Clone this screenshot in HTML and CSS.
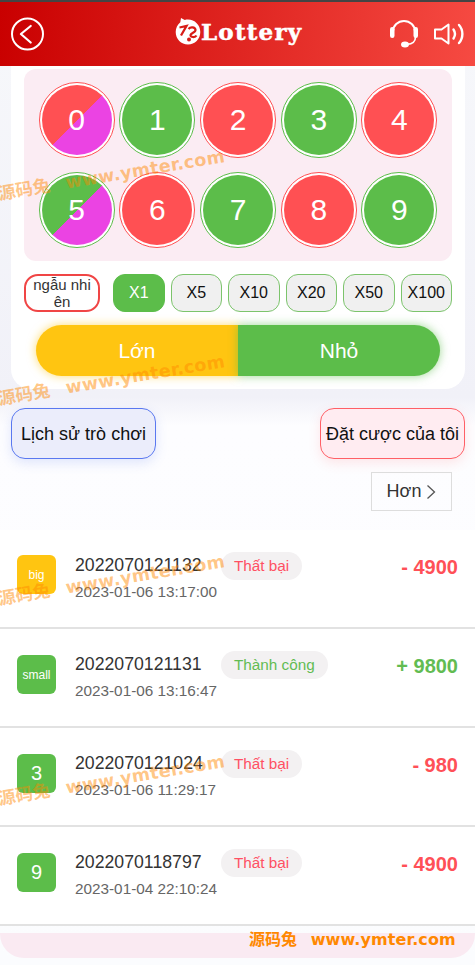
FILE: index.html
```html
<!DOCTYPE html>
<html lang="en">
<head>
    <meta charset="UTF-8">
    <meta name="viewport" content="width=device-width, initial-scale=1.0">
    <title>Lottery</title>
    <link rel="stylesheet" href="styles.css">
</head>
<body>
    <div class="page">
        <header class="top-bar">
            <svg class="back-icon" width="34" height="34" viewBox="0 0 34 34" fill="none" stroke="#fff" stroke-width="2">
                <circle cx="16.500" cy="17" r="15.500"/>
                <path d="M19.700 9 9.900 17l9.800 8.500" stroke-linecap="round" stroke-linejoin="round" stroke-width="2.200"/>
            </svg>
            <div class="logo">
                <svg width="26" height="28" viewBox="0 0 26 28">
                    <path fill="#fff" d="M13 2.500c6.800 0 12.300 5.500 12.300 12.500S19.800 27.500 13 27.500.7 22 .7 15c0-4 1.800-7.500 4.600-9.800L6 1l3.800 1.900C10.800 2.600 11.900 2.500 13 2.500z"/>
                    <path fill="none" stroke="#d81c17" stroke-width="2.300" d="M4.500 10.500l7-1.500-5.500 9.500"/>
                    <path fill="none" stroke="#d81c17" stroke-width="2.200" d="M13.500 12c2-2.500 6.500-2 7 .8.500 2.600-4.500 3-5 5.200-.4 2.200 4.500 3 6 .5"/>
                    <circle cx="14" cy="22.500" r="2" fill="#d81c17"/>
                </svg>
                <span class="logo-text">Lottery</span>
            </div>
            <div class="top-icons">
                <svg width="28" height="28" viewBox="0 0 28 28" fill="none" stroke="#fff" stroke-width="2">
                    <path d="M3 13.500v-2a11 10.500 0 0 1 22 0v2"/>
                    <rect x="0" y="7" width="4.500" height="11" rx="2.200" fill="#fff" stroke="none"/>
                    <rect x="23.500" y="7" width="4.500" height="11" rx="2.200" fill="#fff" stroke="none"/>
                    <path d="M25.500 17c0 4.500-3.500 7-8.500 7.400" stroke-width="1.600"/>
                    <ellipse cx="15" cy="24.500" rx="4" ry="3" fill="#fff" stroke="none"/>
                </svg>
                <svg width="30" height="22" viewBox="0 0 30 22" fill="none" stroke="#fff" stroke-width="2">
                    <path d="M1 6.500h6.500l7-5v19l-7-5H1z" stroke-linejoin="round"/>
                    <path d="M19.500 6.500c2 3 2 6 0 9M25 2c4.500 5 4.500 13 0 18" stroke-linecap="round" stroke-width="2.400"/>
                </svg>
            </div>
        </header>

        <section class="bet-card">
            <div class="ball-panel">
                <div class="ball ring-red"><span class="ball-fill fill-red-violet">0</span></div>
                <div class="ball ring-green"><span class="ball-fill fill-green">1</span></div>
                <div class="ball ring-red"><span class="ball-fill fill-red">2</span></div>
                <div class="ball ring-green"><span class="ball-fill fill-green">3</span></div>
                <div class="ball ring-red"><span class="ball-fill fill-red">4</span></div>
                <div class="ball ring-green"><span class="ball-fill fill-green-violet">5</span></div>
                <div class="ball ring-red"><span class="ball-fill fill-red">6</span></div>
                <div class="ball ring-green"><span class="ball-fill fill-green">7</span></div>
                <div class="ball ring-red"><span class="ball-fill fill-red">8</span></div>
                <div class="ball ring-green"><span class="ball-fill fill-green">9</span></div>
            </div>

            <div class="multi-row">
                <div class="random-btn">ngẫu nhi ên</div>
                <div class="multi-list">
                    <div class="multi-btn active">X1</div>
                    <div class="multi-btn">X5</div>
                    <div class="multi-btn">X10</div>
                    <div class="multi-btn">X20</div>
                    <div class="multi-btn">X50</div>
                    <div class="multi-btn">X100</div>
                </div>
            </div>

            <div class="size-row">
                <div class="size-btn size-big">Lớn</div>
                <div class="size-btn size-small">Nhỏ</div>
            </div>
        </section>

        <div class="tab-row">
            <div class="tab-btn tab-blue">Lịch sử trò chơi</div>
            <div class="tab-btn tab-red">Đặt cược của tôi</div>
        </div>

        <div class="more-row">
            <div class="more-btn">Hơn
                <svg width="10" height="16" viewBox="0 0 10 16" fill="none" stroke="#555" stroke-width="1.300"><path d="M1.500 1.500 8.500 8l-7 6.500"/></svg>
            </div>
        </div>

        <ul class="record-list">
            <li class="record">
                <div class="record-icon icon-yellow icon-word">big</div>
                <div class="record-info">
                    <div class="record-top">
                        <span class="record-id">2022070121132</span>
                        <span class="badge badge-lose">Thất bại</span>
                    </div>
                    <div class="record-date">2023-01-06 13:17:00</div>
                </div>
                <div class="record-amount lose">- 4900</div>
            </li>
            <li class="record">
                <div class="record-icon icon-green icon-word">small</div>
                <div class="record-info">
                    <div class="record-top">
                        <span class="record-id">2022070121131</span>
                        <span class="badge badge-win">Thành công</span>
                    </div>
                    <div class="record-date">2023-01-06 13:16:47</div>
                </div>
                <div class="record-amount win">+ 9800</div>
            </li>
            <li class="record">
                <div class="record-icon icon-green">3</div>
                <div class="record-info">
                    <div class="record-top">
                        <span class="record-id">2022070121024</span>
                        <span class="badge badge-lose">Thất bại</span>
                    </div>
                    <div class="record-date">2023-01-06 11:29:17</div>
                </div>
                <div class="record-amount lose">- 980</div>
            </li>
            <li class="record">
                <div class="record-icon icon-green">9</div>
                <div class="record-info">
                    <div class="record-top">
                        <span class="record-id">2022070118797</span>
                        <span class="badge badge-lose">Thất bại</span>
                    </div>
                    <div class="record-date">2023-01-04 22:10:24</div>
                </div>
                <div class="record-amount lose">- 4900</div>
            </li>
        </ul>

        <div class="bottom-strip"></div>

        <!-- site watermark sits over everything -->
        <div class="watermark wm-1">源码兔 <span>www.ymter.com</span></div>
        <div class="watermark wm-2">源码兔 <span>www.ymter.com</span></div>
        <div class="watermark wm-3">源码兔 <span>www.ymter.com</span></div>
        <div class="watermark wm-4">源码兔 <span>www.ymter.com</span></div>
        <div class="watermark-flat">源码兔 <span>www.ymter.com</span></div>
    </div>
</body>
</html>
```
FILE: styles.css
```css
* {
    margin: 0;
    padding: 0;
    box-sizing: border-box;
}

html, body {
    height: 100%;
}

body {
    font-family: 'Liberation Sans', Arial, sans-serif;
    background: #fff;
    overflow: hidden;
}

.page {
    position: relative;
    height: 965px;
    overflow: hidden;
    background: linear-gradient(180deg, #f7f8fb 0%, #f1f1f8 41%, #fdfdff 44%, #fbfcfe 100%);
    border-top: 2px solid #444;
}

.top-bar {
    height: 64px;
    padding: 0 11px;
    display: flex;
    align-items: center;
    justify-content: space-between;
    background: linear-gradient(95deg, #c90000 0%, #f64a42 100%);
    position: relative;
}

.logo {
    display: flex;
    align-items: center;
    position: absolute;
    left: 175px;
    top: 15px;
}

.logo-text {
    font-family: 'DejaVu Serif', serif;
    font-weight: 700;
    font-size: 23px;
    letter-spacing: 1.200px;
    color: #fff;
    -webkit-text-stroke: 0.5px #fff;
}

.top-icons {
    display: flex;
    align-items: center;
    gap: 16px;
}

.bet-card {
    margin: 0 10px 0 11px;
    padding: 3px 13px 13px;
    background: #fff;
    border-radius: 0 0 20px 20px;
}

.ball-panel {
    height: 192px;
    padding: 13px 14px 13px 14.700px;
    display: grid;
    grid-template-columns: repeat(5, 76px);
    grid-auto-rows: 76px;
    column-gap: 4.700px;
    row-gap: 14px;
    background: #fbecf3;
    border-radius: 12px;
}

.ball {
    width: 76px;
    height: 76px;
    border-radius: 50%;
    padding: 2px;
    background: #fff;
    border: 1px solid #ff5053;
}

.ring-red {
    border-color: #ff5053;
}

.ring-green {
    border-color: #5cbd4a;
}

.ball-fill {
    width: 100%;
    height: 100%;
    border-radius: 50%;
    display: flex;
    align-items: center;
    justify-content: center;
    color: #fff;
    font-size: 30px;
}

.fill-red {
    background: #ff5053;
}

.fill-green {
    background: #5cbd4a;
}

.fill-red-violet {
    background: linear-gradient(135deg, #ff5053 50%, #eb43e3 50%);
}

.fill-green-violet {
    background: linear-gradient(135deg, #5cbd4a 50%, #eb43e3 50%);
}

.multi-row {
    display: flex;
    justify-content: space-between;
    align-items: center;
    margin-top: 13px;
}

.random-btn {
    width: 76px;
    height: 38px;
    border: 2px solid #f04545;
    border-radius: 14px;
    font-size: 15px;
    line-height: 17px;
    text-align: center;
    color: #333;
    background: #fff;
}

.multi-list {
    display: flex;
    gap: 6px;
}

.multi-btn {
    width: 51.500px;
    height: 38px;
    display: flex;
    align-items: center;
    justify-content: center;
    border: 1px solid #7cc46c;
    border-radius: 12px;
    background: #f0f0f0;
    color: #111;
    font-size: 16px;
}

.multi-btn.active {
    background: #5cbd4a;
    border-color: #5cbd4a;
    color: #fff;
}

.size-row {
    display: flex;
    height: 51px;
    margin: 13px 12px 0;
    font-size: 21px;
    color: #fff;
}

.size-btn {
    width: 50%;
    display: flex;
    align-items: center;
    justify-content: center;
}

.size-big {
    background: #ffc511;
    border-radius: 26px 0 0 26px;
    box-shadow: 0 0 10px rgba(255, 197, 17, 0.6);
}

.size-small {
    background: #5cbd4a;
    border-radius: 0 26px 26px 0;
    box-shadow: 0 0 10px rgba(92, 189, 74, 0.6);
}

.tab-row {
    display: flex;
    justify-content: space-between;
    margin: 19px 10px 0 11px;
}

.tab-btn {
    width: 145px;
    height: 51px;
    padding-top: 2px;
    display: flex;
    align-items: center;
    justify-content: center;
    border-radius: 14px;
    font-size: 18px;
    color: #111;
    white-space: nowrap;
}

.tab-blue {
    background: #ebedfb;
    border: 1px solid #5a78f0;
    box-shadow: 0 4px 12px rgba(90, 120, 240, 0.18);
}

.tab-red {
    background: #ffecf1;
    border: 1px solid #ff5f66;
    box-shadow: 0 4px 12px rgba(255, 95, 102, 0.15);
}

.more-row {
    display: flex;
    justify-content: flex-end;
    margin: 13px 23px 0 0;
}

.more-btn {
    width: 81px;
    height: 39px;
    display: flex;
    align-items: center;
    justify-content: center;
    gap: 5px;
    border: 1px solid #ddd;
    font-size: 18px;
    color: #333;
}

.record-list {
    list-style: none;
    margin-top: 19px;
}

.record {
    height: 99px;
    padding: 25px 17px 0;
    display: flex;
    background: #fff;
    border-bottom: 2px solid #e2e2e2;
}

.record-icon {
    width: 39px;
    height: 39px;
    margin-top: 1px;
    border-radius: 6px;
    display: flex;
    align-items: center;
    justify-content: center;
    color: #fff;
    font-size: 20px;
    flex-shrink: 0;
}

.record:first-child .record-icon {
    margin-top: 0;
}

.icon-word {
    font-size: 12px;
}

.icon-yellow {
    background: #ffc511;
}

.icon-green {
    background: #5cbd4a;
}

.record-info {
    margin-left: 19px;
    flex: 1;
}

.record-top {
    display: flex;
    align-items: center;
    margin-top: -3px;
    height: 28px;
}

.record-id {
    font-size: 17.700px;
    color: #333;
    width: 146px;
    flex-shrink: 0;
    margin-bottom: 2px;
}

.badge {
    height: 28px;
    padding: 0 13px;
    display: flex;
    align-items: center;
    background: #f3f1f2;
    border-radius: 14px;
    font-size: 15.300px;
    white-space: nowrap;
}

.badge-lose {
    color: #ff5063;
}

.badge-win {
    color: #62bc52;
}

.record-date {
    font-size: 15.300px;
    color: #666;
    margin-top: 3px;
}

.record-amount {
    font-size: 20px;
    font-weight: 700;
    white-space: nowrap;
    margin-top: 1px;
}

.lose {
    color: #ff5057;
}

.win {
    color: #62bc52;
}

.bottom-strip {
    height: 25px;
    margin-top: 7px;
    background: #faeaf2;
    border-radius: 0 0 24px 24px;
}

.watermark {
    position: absolute;
    left: -2px;
    font-family: 'Noto Sans CJK SC', sans-serif;
    font-size: 17.500px;
    font-weight: 700;
    color: rgba(255, 136, 0, 0.48);
    white-space: nowrap;
    transform-origin: left center;
    transform: rotate(-9.500deg);
}

.watermark span,
.watermark-flat span {
    font-family: 'DejaVu Sans', sans-serif;
}

.watermark span {
    letter-spacing: 0.300px;
    margin-left: 12px;
}

.wm-1 { top: 178px; }
.wm-2 { top: 383px; }
.wm-3 { top: 583px; }
.wm-4 { top: 783px; }

.watermark-flat {
    position: absolute;
    left: 249px;
    top: 924px;
    font-family: 'Noto Sans CJK SC', sans-serif;
    font-size: 16px;
    font-weight: 700;
    color: #ff8800;
    white-space: nowrap;
}

.watermark-flat span {
    letter-spacing: 0.100px;
    margin-left: 10px;
}
```
